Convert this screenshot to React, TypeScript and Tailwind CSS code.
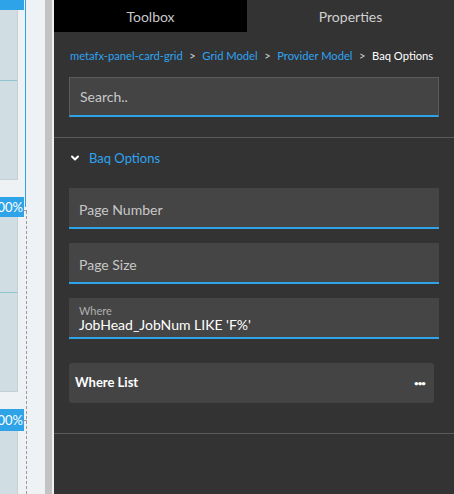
import { ChevronDown } from "lucide-react";

const font = { fontFamily: "Lato, 'Noto Sans', sans-serif" };

function LeftStrip() {
  return (
    <div className="flex h-full w-[54px] shrink-0">
      <div className="relative h-full w-[45px] bg-[#eef2f5]">
        {/* cells */}
        <div className="absolute left-0 top-0 h-[180px] w-[18px] border-r border-b border-[#c5cfd4] bg-[#d0dde3]">
          <div className="mt-[80px] h-px w-full bg-[#8fc3d2]" />
        </div>
        <div className="absolute left-0 top-[216px] h-[176px] w-[18px] border-r border-b border-[#c5cfd4] bg-[#d0dde3]">
          <div className="mt-[76px] h-px w-full bg-[#8fc3d2]" />
        </div>
        <div className="absolute left-0 top-[431px] h-[63px] w-[18px] border-r border-[#c5cfd4] bg-[#d0dde3]" />
        {/* selection outline */}
        <div className="absolute left-[25px] top-0 h-[207px] w-px bg-[#2ea3e8]" />
        <div className="absolute left-[26px] top-[211px] h-[283px] border-l border-dashed border-[#9a9a9a]" />
        {/* labels */}
        <div className="absolute left-0 top-0 h-[10px] w-[24px] bg-[#2ea3e8]" />
        <div className="absolute left-0 top-[197px] flex h-[20px] w-[24px] items-center justify-end overflow-hidden whitespace-nowrap bg-[#2ea3e8] pr-[1px] text-[13px] leading-none text-white">
          100%
        </div>
        <div className="absolute left-[24px] top-[210px] h-px w-[3px] bg-[#9a9a9a]" />
        <div className="absolute left-0 top-[409px] flex h-[22px] w-[24px] items-center justify-end overflow-hidden whitespace-nowrap bg-[#2ea3e8] pr-[1px] text-[13px] leading-none text-white">
          100%
        </div>
        <div className="absolute left-[24px] top-[420px] h-px w-[3px] bg-[#9a9a9a]" />
      </div>
      <div className="h-full w-[7px] bg-[#c3c3c3]" />
      <div className="h-full w-[2px] bg-[#f0f0f0]" />
    </div>
  );
}

function Field({ label }: { label: string }) {
  return (
    <div className="flex h-[41px] items-center border-b-2 border-[#2ea3e8] bg-[#454545] px-[10px] pt-[3px] text-[14px] text-[#c8c8c8]">
      {label}
    </div>
  );
}

export default function App() {
  return (
    <div className="flex h-[494px] w-[454px] overflow-hidden" style={font}>
      <LeftStrip />
      <div className="flex h-full min-w-0 flex-1 flex-col bg-[#333333]">
        <div className="flex h-[32px] text-[14px]">
          <div className="flex w-[193px] items-center justify-center bg-black text-[#c8c8c8]">Toolbox</div>
          <div className="flex flex-1 items-center justify-center text-[#d0d0d0]">Properties</div>
        </div>
        <div className="mt-[15px] flex items-center gap-[6.5px] whitespace-nowrap px-[16px] text-[11.2px] leading-[18px] text-[#2ea3f2]">
          <span>metafx-panel-card-grid</span>
          <span className="text-[#d0d0d0]">&gt;</span>
          <span>Grid Model</span>
          <span className="text-[#d0d0d0]">&gt;</span>
          <span>Provider Model</span>
          <span className="text-[#d0d0d0]">&gt;</span>
          <span className="text-white">Baq Options</span>
        </div>
        <div className="mx-[15px] mt-[12px] flex h-[40px] items-center border border-b-2 border-[#5c5c5c] border-b-[#2ea3e8] bg-[#444444] px-[10px] text-[14px] text-[#c8c8c8]">
          Search..
        </div>
        <div className="mt-[20px] h-px bg-[#5a5a5a]" />
        <div className="mt-[12px] flex items-center px-[15px] text-[13px] leading-[16px] text-[#2ea3f2]">
          <ChevronDown className="h-[12px] w-[12px] text-white" strokeWidth={4} />
          <span className="ml-[8px]">Baq Options</span>
        </div>
        <div className="mx-[15px] mt-[22px] flex flex-col gap-[14px]">
          <Field label="Page Number" />
          <Field label="Page Size" />
          <div className="flex h-[41px] flex-col justify-center border-b-2 border-[#2ea3e8] bg-[#454545] px-[10px] pt-[2px]">
            <span className="text-[11px] leading-[13px] text-[#b0b0b0]">Where</span>
            <span className="text-[14px] leading-[16px] text-white">JobHead_JobNum LIKE 'F%'</span>
          </div>
        </div>
        <div className="ml-[15px] mr-[20px] mt-[24px] flex h-[40px] items-center justify-between rounded-[3px] bg-[#444444] pl-[6px] pr-[9px]">
          <span className="text-[13px] font-bold text-white">Where List</span>
          <span className="text-[8px] font-bold leading-none tracking-[-1px] text-white">•••</span>
        </div>
        <div className="mt-[30px] h-px bg-[#5a5a5a]" />
      </div>
    </div>
  );
}
